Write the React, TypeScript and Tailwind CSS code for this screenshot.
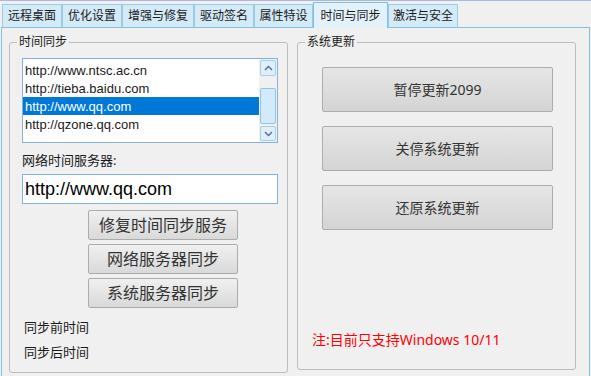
import React from "react";

const tabs: { label: string; w: string; active?: boolean }[] = [
  { label: "远程桌面", w: "w-[60px]" },
  { label: "优化设置", w: "w-[60px]" },
  { label: "增强与修复", w: "w-[72px]" },
  { label: "驱动签名", w: "w-[60px]" },
  { label: "属性特设", w: "w-[59px]" },
  { label: "时间与同步", w: "w-[75px]", active: true },
  { label: "激活与安全", w: "w-[70px]" },
];

const items = [
  "http://www.ntsc.ac.cn",
  "http://tieba.baidu.com",
  "http://www.qq.com",
  "http://qzone.qq.com",
];

function Chevron({ up }: { up?: boolean }) {
  return (
    <svg width="9" height="6" viewBox="0 0 9 6">
      <path
        d={up ? "M1 5 L4.5 1.5 L8 5" : "M1 1 L4.5 4.5 L8 1"}
        fill="none"
        stroke="#4d6f96"
        strokeWidth="1.4"
      />
    </svg>
  );
}

function LeftButton({ children }: { children: React.ReactNode }) {
  return (
    <div className="w-[150px] h-[30px] border border-[#acacac] rounded-[2px] bg-linear-to-b from-[#f0f0f0] to-[#d9d9d9] flex items-center justify-center text-[16px] text-[#333] leading-none">
      {children}
    </div>
  );
}

function RightButton({ children }: { children: React.ReactNode }) {
  return (
    <div className="w-[231px] h-[45px] border border-[#adadad] rounded-[2px] bg-linear-to-b from-[#e6e6e6] to-[#d4d4d4] flex items-center justify-center text-[14px] text-[#333] leading-none">
      {children}
    </div>
  );
}

export default function App() {
  return (
    <div className="w-[591px] h-[376px] bg-[#f0f0f0] flex flex-col overflow-hidden font-['Noto_Sans','Noto_Sans_CJK_SC',sans-serif] text-[#1a1a1a]">
      <div className="h-[1px] bg-[#a9b6e6] shrink-0" />
      <div className="h-[26px] shrink-0 flex items-end pl-[2px]">
        {tabs.map((t) =>
          t.active ? (
            <div
              key={t.label}
              className={`${t.w} h-[26px] -mb-[1px] relative z-10 border border-b-0 border-[#7cc0dc] bg-[#e3f1fa] flex items-center justify-center text-[12px] leading-none`}
            >
              {t.label}
            </div>
          ) : (
            <div
              key={t.label}
              className={`${t.w} h-[23px] border border-b-0 border-[#9ccbe2] bg-[#d5eaf7] flex items-center justify-center text-[12px] leading-none`}
            >
              {t.label}
            </div>
          )
        )}
      </div>
      <div className="ml-[1px] w-[589px] h-[360px] shrink-0 border border-[#82c4de] flex items-start pl-[7px] pt-[14px] gap-[9px]">
        {/* left group */}
        <div className="relative w-[279px] h-[331px] border border-[#bdbdbd] rounded-[3px] flex flex-col pl-[12px] pt-[15px]">
          <span className="absolute left-[7px] -top-[9px] px-[2px] bg-[#f0f0f0] text-[12px] leading-[16px]">
            时间同步
          </span>
          <div className="w-[256px] h-[85px] border border-[#84b2dc] bg-white flex">
            <div className="w-[236px] flex flex-col pt-[2px] font-['Liberation_Sans',sans-serif]">
              {items.map((it, i) => (
                <div
                  key={it}
                  className={`h-[18px] pl-[2px] flex items-center text-[13px] leading-none ${
                    i === 2 ? "bg-[#0078d7] text-white" : ""
                  }`}
                >
                  {it}
                </div>
              ))}
            </div>
            <div className="w-[18px] bg-[#f0f0f0] flex flex-col items-center pt-[1px]">
              <div className="w-[16px] h-[16px] border border-[#a6cfea] bg-[#deeefa] rounded-[2px] flex items-center justify-center">
                <Chevron up />
              </div>
              <div className="w-[16px] h-[36px] mt-[12px] border border-[#91c3e8] bg-[#d4e9f9] rounded-[2px]" />
              <div className="w-[16px] h-[15px] mt-[2px] border border-[#a6cfea] bg-[#deeefa] rounded-[2px] flex items-center justify-center">
                <Chevron />
              </div>
            </div>
          </div>
          <div className="mt-[8px] h-[18px] flex items-center text-[13px] leading-none">网络时间服务器:</div>
          <div className="mt-[5px] w-[256px] h-[30px] border border-[#84b2dc] bg-white flex items-center pl-[2px] text-[18px] leading-none font-['Liberation_Sans',sans-serif] text-black">
            http://www.qq.com
          </div>
          <div className="mt-[6px] ml-[66px] flex flex-col gap-[4px]">
            <LeftButton>修复时间同步服务</LeftButton>
            <LeftButton>网络服务器同步</LeftButton>
            <LeftButton>系统服务器同步</LeftButton>
          </div>
          <div className="mt-[10px] ml-[2px] h-[18px] flex items-center text-[13px] leading-none">同步前时间</div>
          <div className="mt-[7px] ml-[2px] h-[18px] flex items-center text-[13px] leading-none">同步后时间</div>
        </div>
        {/* right group */}
        <div className="relative w-[279px] h-[328px] border border-[#bdbdbd] rounded-[3px] flex flex-col pl-[24px] pt-[24px] pb-[20px]">
          <span className="absolute left-[7px] -top-[9px] px-[2px] bg-[#f0f0f0] text-[12px] leading-[16px]">
            系统更新
          </span>
          <div className="flex flex-col gap-[14px]">
            <RightButton>暂停更新2099</RightButton>
            <RightButton>关停系统更新</RightButton>
            <RightButton>还原系统更新</RightButton>
          </div>
          <div className="mt-auto -ml-[10px] h-[18px] flex items-center text-[14px] leading-none text-[#f00]">
            注:目前只支持Windows 10/11
          </div>
        </div>
      </div>
    </div>
  );
}
